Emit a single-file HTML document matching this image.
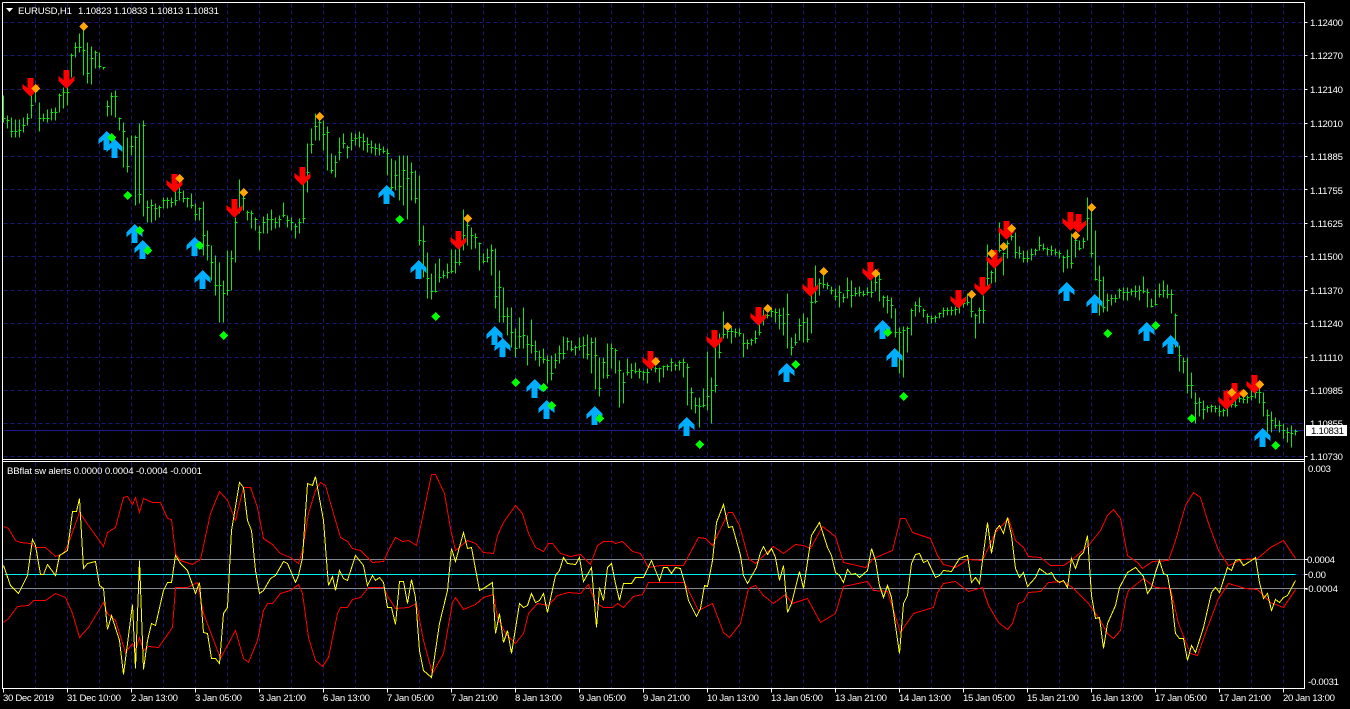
<!DOCTYPE html>
<html><head><meta charset="utf-8"><title>EURUSD,H1</title>
<style>
html,body{margin:0;padding:0;background:#000;width:1350px;height:709px;overflow:hidden}
svg{display:block}
text{font-family:"Liberation Sans",sans-serif;font-size:9.6px;fill:#fff}
</style></head><body>
<svg width="1350" height="709" viewBox="0 0 1350 709" xmlns="http://www.w3.org/2000/svg">
<defs>
<polygon id="d" points="-3,0 3,0 3,10 8,6 8,11 0,18.5 -8,11 -8,6 -3,10" fill="#ff0000"/>
<polygon id="u" points="-3,19 3,19 3,9 8,13 8,8 0,0 -8,8 -8,13 -3,9" fill="#00aeff"/>
<polygon id="o" points="0,-4.5 4.5,0 0,4.5 -4.5,0" fill="#ffa500"/>
<polygon id="g" points="0,-4.5 4.5,0 0,4.5 -4.5,0" fill="#00ff00"/>
</defs>
<rect width="1350" height="709" fill="#000"/>
<g transform="translate(.5,.5)" shape-rendering="crispEdges" fill="none">
<path stroke="#191970" stroke-dasharray="4 3" d="M3 22H1304M3 55H1304M3 89H1304M3 123H1304M3 156H1304M3 189H1304M3 223H1304M3 256H1304M3 290H1304M3 323H1304M3 357H1304M3 390H1304M3 423H1304M3 456H1304
M35 3V459M67 3V459M99 3V459M131 3V459M163 3V459M195 3V459M227 3V459M259 3V459M291 3V459M323 3V459M355 3V459M387 3V459M419 3V459M451 3V459M483 3V459M515 3V459M547 3V459M579 3V459M611 3V459M643 3V459M675 3V459M707 3V459M739 3V459M771 3V459M803 3V459M835 3V459M867 3V459M899 3V459M931 3V459M963 3V459M995 3V459M1027 3V459M1059 3V459M1091 3V459M1123 3V459M1155 3V459M1187 3V459M1219 3V459M1251 3V459M1283 3V459
M35 462V688M67 462V688M99 462V688M131 462V688M163 462V688M195 462V688M227 462V688M259 462V688M291 462V688M323 462V688M355 462V688M387 462V688M419 462V688M451 462V688M483 462V688M515 462V688M547 462V688M579 462V688M611 462V688M643 462V688M675 462V688M707 462V688M739 462V688M771 462V688M803 462V688M835 462V688M867 462V688M899 462V688M931 462V688M963 462V688M995 462V688M1027 462V688M1059 462V688M1091 462V688M1123 462V688M1155 462V688M1187 462V688M1219 462V688M1251 462V688M1283 462V688"/>
<path stroke="#1a1a8c" d="M3 430H1304"/>
<path stroke="#10e810" d="M3 95V122M2 118h3M7 115V128M6 120h3M11 117V137M10 131h3M15 119V137M14 131h3M19 119V137M18 130h3M23 117V132M22 125h3M27 113V125M26 118h3M31 93V118M30 105h3M35 85V102M34 91h3M39 102V131M38 118h3M43 113V121M42 118h3M47 109V122M46 118h3M51 108V120M50 112h3M55 107V120M54 112h3M59 93V112M58 95h3M63 87V108M62 92h3M67 87V105M66 92h3M71 53V77M70 55h3M75 42V57M74 47h3M79 33V52M78 47h3M83 27V75M82 50h3M87 42V83M86 73h3M91 46V84M90 58h3M95 50V68M94 52h3M99 52V68M98 66h3M103 67V69M102 67h3
M107 100V116M106 106h3M111 92V115M110 96h3M115 90V117M114 96h3M119 117V130M118 118h3M123 122V167M122 131h3M127 137V172M126 166h3M131 135V155M130 146h3M135 135V205M134 137h3M139 123V203M138 194h3M143 120V216M142 125h3M147 200V222M146 207h3M151 199V222M150 205h3M155 203V220M154 208h3M159 205V217M158 207h3M163 197V208M162 200h3M167 197V208M166 200h3M171 197V207M170 202h3M175 185V205M174 200h3M179 187V200M178 192h3M183 190V202M182 198h3M187 197V207M186 198h3M191 193V208M190 205h3M195 203V220M194 214h3M199 207V220M198 208h3M203 201V255M202 235h3M207 230V260M206 245h3M211 245V280M210 262h3M215 255V295M214 285h3M219 262V322M218 285h3M223 280V322M222 293h3M227 250V295M226 290h3M231 250V290M230 258h3M235 217V262M234 222h3M239 179V213M238 208h3M243 190V210M242 198h3M247 210V220M246 212h3M251 210V228M250 213h3M255 217V230M254 219h3M259 225V250M258 232h3M263 216V233M262 222h3M267 213V233M266 219h3M271 209V230M270 219h3M275 217V228M274 222h3M279 215V227M278 219h3M283 202V217M282 215h3M287 215V227M286 220h3M291 217V230M290 222h3M295 223V238M294 226h3M299 218V233M298 222h3M303 183V223M302 218h3M307 143V192M306 172h3M311 128V153M310 144h3M315 113V140M314 126h3M319 117V140M318 122h3M323 120V150M322 134h3M327 126V170M326 132h3M331 153V173M330 170h3M335 155V177M334 162h3M339 137V160M338 152h3M343 133V148M342 143h3M347 145V158M346 147h3M351 132V150M350 140h3M355 133V145M354 138h3M359 131V147M358 137h3M363 133V150M362 141h3M367 137V152M366 144h3M371 140V153M370 147h3M375 143V155M374 148h3M379 143V155M378 149h3M383 146V153M382 151h3M387 148V175M386 153h3M391 158V195M390 187h3M395 160V190M394 175h3M399 155V200M398 186h3M403 155V205M402 170h3M407 155V219M406 178h3M411 162V200M410 172h3M415 170V203M414 198h3M419 175V245M418 240h3M423 225V277M422 241h3M427 252V298M426 278h3M431 273V299M430 291h3M435 263V292M434 291h3M439 258V282M438 277h3M443 270V278M442 275h3M447 263V278M446 272h3M451 249V273M450 271h3M455 249V273M454 262h3M459 248V265M458 262h3M463 209V250M462 235h3M467 220V245M466 225h3M471 227V249M470 235h3M475 233V248M474 237h3M479 242V270M478 243h3M483 253V263M482 261h3M487 248V262M486 257h3M491 244V275M490 250h3M495 248V308M494 296h3M499 270V322M498 287h3M503 287V322M502 316h3M507 307V335M506 316h3M511 307V347M510 332h3M515 328V357M514 348h3M519 317V348M518 336h3M523 307V348M522 335h3M527 335V365M526 344h3M531 319V353M530 345h3M535 340V360M534 351h3M539 350V366M538 357h3M543 348V363M542 359h3M547 355V383M546 360h3M551 355V380M550 373h3M555 353V368M554 360h3M559 345V363M558 353h3M563 336V359M562 353h3M567 337V350M566 341h3M571 340V351M570 349h3M575 345V355M574 347h3M579 337V350M578 346h3M583 336V358M582 345h3M587 334V359M586 354h3M591 337V373M590 342h3M595 337V389M594 355h3M599 357V396M598 388h3M603 357V378M602 362h3M607 343V378M606 375h3M611 343V368M610 348h3M615 348V373M614 350h3M619 360V407M618 370h3M623 372V403M622 382h3M627 358V375M626 372h3M631 363V378M630 370h3M635 362V373M634 371h3M639 368V378M638 371h3M643 370V380M642 372h3M647 368V383M646 372h3M651 360V370M650 367h3M655 366V372M654 368h3M659 367V382M658 368h3M663 365V377M662 366h3M667 364V370M666 366h3M671 358V371M670 362h3M675 363V370M674 365h3M679 360V370M678 362h3M683 358V377M682 362h3M687 363V405M686 367h3M691 387V409M690 392h3M695 397V413M694 405h3M699 397V427M698 406h3M703 388V407M702 405h3M707 351V410M706 396h3M711 377V423M710 390h3M715 345V392M714 385h3M719 333V358M718 352h3M723 311V338M722 334h3M727 322V338M726 331h3M731 327V343M730 331h3M735 328V337M734 332h3M739 328V336M738 333h3M743 333V357M742 343h3M747 339V349M746 343h3M751 338V345M750 340h3M755 330V343M754 338h3M759 322V335M758 332h3M763 309V325M762 315h3M767 313V318M766 315h3M771 307V317M770 311h3M775 308V322M774 312h3M779 308V329M778 315h3M783 307V335M782 323h3M787 293V348M786 314h3M791 337V355M790 347h3M795 333V345M794 342h3M799 318V340M798 325h3M803 313V342M802 322h3M807 317V342M806 339h3M811 295V333M810 302h3M815 265V303M814 301h3M819 278V295M818 283h3M823 275V288M822 284h3M827 282V289M826 285h3M831 286V294M830 290h3M835 288V300M834 296h3M839 285V307M838 292h3M843 293V302M842 297h3M847 277V298M846 290h3M851 280V307M850 295h3M855 287V296M854 293h3M859 286V296M858 292h3M863 290V296M862 294h3M867 287V295M866 292h3M871 280V297M870 292h3M875 275V291M874 282h3M879 272V301M878 279h3M883 295V307M882 297h3M887 295V313M886 300h3M891 297V318M890 305h3M895 308V337M894 332h3M899 327V373M898 332h3M903 326V377M902 330h3M907 326V352M906 328h3M911 308V335M910 310h3M915 301V316M914 305h3M919 297V312M918 306h3M923 308V317M922 310h3M927 313V323M926 316h3M931 315V323M930 318h3M935 315V322M934 317h3M939 312V318M938 313h3M943 307V317M942 310h3M947 307V315M946 310h3M951 306V315M950 310h3M955 306V315M954 309h3M959 302V313M958 305h3M963 300V307M962 303h3M967 293V305M966 302h3M971 298V317M970 311h3M975 313V338M974 315h3M979 307V323M978 310h3M983 295V323M982 310h3M987 244V285M986 278h3M991 270V283M990 272h3M995 255V282M994 265h3M999 222V252M998 250h3M1003 252V275M1002 253h3M1007 240V258M1006 243h3M1011 232V240M1010 236h3M1015 232V258M1014 252h3M1019 246V258M1018 253h3M1023 250V262M1022 258h3M1027 250V262M1026 258h3M1031 248V260M1030 254h3M1035 248V255M1034 250h3M1039 236V250M1038 245h3M1043 243V250M1042 248h3M1047 247V255M1046 249h3M1051 245V255M1050 250h3M1055 248V255M1054 252h3M1059 250V258M1058 253h3M1063 255V272M1062 257h3M1067 249V268M1066 256h3M1071 233V268M1070 263h3M1075 233V257M1074 240h3M1079 240V250M1078 248h3M1083 237V248M1082 241h3M1087 197V240M1086 218h3M1091 207V257M1090 253h3M1095 230V280M1094 279h3M1099 265V315M1098 280h3M1103 276V312M1102 307h3M1107 293V311M1106 300h3M1111 294V305M1110 298h3M1115 294V302M1114 298h3M1119 288V298M1118 290h3M1123 287V300M1122 292h3M1127 287V300M1126 292h3M1131 288V295M1130 291h3M1135 285V297M1134 291h3M1139 285V300M1138 290h3M1143 276V293M1142 291h3M1147 288V307M1146 292h3M1151 298V307M1150 306h3M1155 289V305M1154 304h3M1159 283V297M1158 294h3M1163 280V297M1162 290h3M1167 284V298M1166 294h3M1171 289V313M1170 294h3M1175 313V347M1174 315h3M1179 345V371M1178 355h3M1183 357V373M1182 361h3M1187 357V393M1186 385h3M1191 372V398M1190 385h3M1195 392V423M1194 403h3M1199 397V416M1198 402h3M1203 400V419M1202 409h3M1207 405V412M1206 407h3M1211 404V412M1210 406h3M1215 405V412M1214 408h3M1219 405V416M1218 411h3M1223 408V416M1222 410h3M1227 397V416M1226 405h3M1231 400V407M1230 404h3M1235 400V407M1234 405h3M1239 392V402M1238 398h3M1243 395V403M1242 399h3M1247 395V403M1246 397h3M1251 390V400M1250 396h3M1255 388V398M1254 392h3M1259 387V403M1258 392h3M1263 392V416M1262 402h3M1267 409V432M1266 415h3M1271 411V432M1270 420h3M1275 417V428M1274 425h3M1279 420V432M1278 425h3M1283 423V438M1282 430h3M1287 427V442M1286 432h3M1291 425V447M1290 433h3M1295 429V435M1294 431h3"/>
<path stroke="#808890" d="M4 559H1304M4 588H1304"/>
<path stroke="#00f0f0" d="M4 574H1295"/>
<path stroke="#191970" stroke-dasharray="3 3" d="M1295 574H1304"/>
<polyline stroke="#ff0000" points="3,526 8,528 15,540 20,542 30,543 35,547 45,547 55,556 63,553 68,543 79,512 88,525 103,546 107,532 115,527 123,497 127,496 132,504 135,497 139,512 143,498 152,502 160,502 167,518 171,519 175,553 180,560 192,564 200,559 210,513 219,491 227,500 235,520 243,487 250,487 257,507 263,538 272,544 280,553 290,557 298,563 302,550 308,513 315,490 320,482 325,485 333,513 340,537 347,541 352,548 360,550 372,562 383,561 388,550 395,537 402,541 408,540 416,545 425,503 431,474 435,474 444,493 450,528 455,550 467,540 475,543 483,552 493,553 497,535 503,522 515,505 522,513 528,533 535,547 543,551 548,543 552,543 560,553 570,556 580,554 590,564 597,545 603,541 612,541 615,543 622,541 632,551 640,553 648,567 660,565 683,565 698,537 705,538 712,545 728,512 732,512 739,525 748,558 755,563 773,546 783,553 795,544 803,545 810,548 822,526 835,536 843,562 865,567 873,558 892,550 900,518 905,518 912,532 930,538 937,555 943,564 955,567 967,559 982,560 995,532 1008,518 1015,540 1023,547 1028,556 1040,557 1050,565 1063,565 1072,559 1088,545 1100,530 1107,515 1113,509 1120,518 1127,555 1137,562 1142,568 1152,561 1168,560 1175,540 1185,505 1193,492 1200,497 1208,523 1218,550 1228,565 1242,559 1257,558 1270,547 1283,540 1295,558"/>
<polyline stroke="#ff0000" points="3,622 8,618 17,606 28,605 33,600 45,600 55,593 65,597 72,613 79,637 88,627 103,602 107,613 115,620 125,652 132,643 135,650 139,637 143,650 148,646 158,647 172,627 175,587 187,587 197,582 203,613 220,658 235,630 243,658 248,662 257,640 263,610 267,603 272,603 280,593 290,590 298,584 302,593 308,637 315,660 322,666 328,657 337,613 340,607 347,607 352,599 360,597 368,587 383,587 388,597 395,608 408,607 416,603 423,640 432,673 443,653 452,602 455,597 463,609 475,604 483,597 493,594 497,617 505,633 515,643 523,633 528,613 537,603 548,605 557,595 568,592 580,593 588,584 595,602 603,607 612,607 617,603 623,607 633,596 642,594 648,582 660,582 684,582 698,610 712,603 723,632 729,637 740,623 748,588 755,585 763,595 773,603 785,594 792,603 807,598 820,622 835,613 843,586 867,581 873,590 887,591 900,632 913,613 933,607 937,592 943,583 955,581 968,591 982,587 988,605 998,622 1007,629 1012,623 1018,603 1023,601 1028,592 1040,591 1048,582 1062,581 1072,587 1088,603 1098,617 1107,633 1113,638 1120,630 1125,600 1128,590 1138,582 1143,578 1155,587 1170,588 1178,623 1190,653 1197,655 1207,627 1218,598 1228,583 1245,588 1257,589 1270,602 1283,607 1295,589"/>
<polyline stroke="#ffff00" points="3,565 10,585 18,593 27,575 32,539 35,545 40,574 43,574 47,564 55,575 59,555 67,550 72,511 76,511 79,498 83,568 87,563 95,561 99,585 103,588 107,629 111,615 119,640 123,674 132,604 135,668 139,560 143,669 147,640 151,623 155,625 163,590 167,582 171,582 175,555 180,563 187,570 195,593 199,582 203,632 207,633 211,658 215,658 219,663 223,613 227,607 231,530 239,482 243,487 247,520 251,530 255,570 259,593 263,590 270,578 275,575 283,561 287,563 295,582 298,575 302,557 307,483 312,485 315,476 323,520 327,573 328,585 332,576 335,590 339,570 343,578 347,580 355,555 363,565 367,585 372,575 375,580 379,577 383,582 387,607 391,607 395,624 399,581 403,581 407,603 411,579 415,597 419,650 423,670 431,677 439,623 447,590 451,548 455,561 463,532 467,548 471,547 479,590 483,588 492,582 495,633 499,613 503,642 507,630 511,653 519,603 523,607 527,605 531,593 535,602 539,600 543,593 547,612 555,575 559,570 563,557 567,563 575,564 579,557 583,581 591,567 596,627 599,587 603,600 607,567 611,563 615,583 619,600 623,583 631,583 635,577 643,577 651,560 659,580 663,567 667,567 671,573 675,567 680,568 684,582 688,600 696,616 700,608 704,585 707,586 712,560 716,522 723,504 728,527 732,526 740,555 743,575 747,583 756,567 760,552 763,546 767,554 771,548 775,557 779,580 783,565 787,612 791,603 799,571 803,588 811,535 819,522 827,547 831,555 835,572 839,575 843,582 847,569 851,574 855,573 859,577 867,570 871,548 875,560 879,585 883,597 887,585 891,597 899,653 903,603 907,595 911,563 915,554 919,553 923,562 927,560 935,577 939,575 943,570 951,571 959,558 967,555 971,582 975,577 979,583 987,522 991,553 995,530 999,525 1003,533 1007,517 1011,535 1015,568 1019,577 1023,572 1027,586 1035,577 1039,568 1047,574 1051,572 1055,579 1059,582 1063,580 1067,587 1071,558 1075,568 1079,556 1083,552 1087,535 1091,595 1095,618 1099,617 1103,648 1107,623 1115,605 1119,587 1127,572 1135,567 1143,576 1147,593 1151,587 1155,572 1159,560 1163,573 1167,575 1171,597 1175,633 1179,638 1183,638 1187,660 1191,645 1195,652 1203,627 1211,592 1215,587 1219,592 1227,567 1231,570 1235,560 1239,559 1243,565 1251,560 1255,557 1259,582 1263,598 1267,593 1271,610 1275,599 1279,602 1283,597 1287,595 1295,580"/>
<path stroke="#fff" d="M2 2H1304V688H2V2M2 459H1304M2 461H1304"/>
<path stroke="#fff" d="M3 688v4M67 688v4M131 688v4M195 688v4M259 688v4M323 688v4M387 688v4M451 688v4M515 688v4M579 688v4M643 688v4M707 688v4M771 688v4M835 688v4M899 688v4M963 688v4M1027 688v4M1091 688v4M1155 688v4M1219 688v4M1283 688v4
M1304 22h3M1304 55h3M1304 89h3M1304 123h3M1304 156h3M1304 189h3M1304 223h3M1304 256h3M1304 290h3M1304 323h3M1304 357h3M1304 390h3M1304 456h3M1304 559h3M1304 574h3M1304 588h3"/>
</g>
<g shape-rendering="crispEdges">
<use href="#d" x="30.5" y="78"/><use href="#d" x="66.5" y="70"/><use href="#d" x="174.5" y="174"/><use href="#d" x="234.5" y="199"/><use href="#d" x="302.5" y="167"/><use href="#d" x="458.5" y="231"/><use href="#d" x="650.5" y="351"/><use href="#d" x="714.5" y="330"/><use href="#d" x="758.5" y="307"/><use href="#d" x="810.5" y="278"/><use href="#d" x="870.5" y="262"/><use href="#d" x="958.5" y="290"/><use href="#d" x="982.5" y="277"/><use href="#d" x="994.5" y="250"/><use href="#d" x="1006.5" y="221"/><use href="#d" x="1070.5" y="212"/><use href="#d" x="1078.5" y="214"/><use href="#d" x="1226.5" y="391"/><use href="#d" x="1234.5" y="383"/><use href="#d" x="1254.5" y="375"/>
<use href="#u" x="106.5" y="131"/><use href="#u" x="114.5" y="139"/><use href="#u" x="134.5" y="224"/><use href="#u" x="142.5" y="240"/><use href="#u" x="194.5" y="237"/><use href="#u" x="202.5" y="270"/><use href="#u" x="386.5" y="185"/><use href="#u" x="418.5" y="260"/><use href="#u" x="494.5" y="326"/><use href="#u" x="502.5" y="338"/><use href="#u" x="534.5" y="379"/><use href="#u" x="546.5" y="400"/><use href="#u" x="594.5" y="406"/><use href="#u" x="686.5" y="417"/><use href="#u" x="786.5" y="363"/><use href="#u" x="882.5" y="320"/><use href="#u" x="894.5" y="348"/><use href="#u" x="1066.5" y="282"/><use href="#u" x="1094.5" y="294"/><use href="#u" x="1146.5" y="322"/><use href="#u" x="1170.5" y="335"/><use href="#u" x="1262.5" y="428"/>
<use href="#o" x="35.5" y="88.5"/><use href="#o" x="83.5" y="26.5"/><use href="#o" x="179.5" y="178.5"/><use href="#o" x="243.5" y="192.5"/><use href="#o" x="319.5" y="116.5"/><use href="#o" x="467.5" y="218.5"/><use href="#o" x="655.5" y="361.5"/><use href="#o" x="727.5" y="326.5"/><use href="#o" x="767.5" y="308.5"/><use href="#o" x="823.5" y="271.5"/><use href="#o" x="875.5" y="273.5"/><use href="#o" x="971.5" y="294.5"/><use href="#o" x="1003.5" y="246.5"/><use href="#o" x="1011.5" y="228.5"/><use href="#o" x="991.5" y="253.5"/><use href="#o" x="1075.5" y="235.5"/><use href="#o" x="1091.5" y="207.5"/><use href="#o" x="1231.5" y="392.5"/><use href="#o" x="1243.5" y="393.5"/><use href="#o" x="1259.5" y="384.5"/>
<use href="#g" x="111.5" y="137.5"/><use href="#g" x="127.5" y="195.5"/><use href="#g" x="139.5" y="230.5"/><use href="#g" x="147.5" y="250.5"/><use href="#g" x="199.5" y="245.5"/><use href="#g" x="223.5" y="335.5"/><use href="#g" x="399.5" y="219.5"/><use href="#g" x="435.5" y="316.5"/><use href="#g" x="515.5" y="382.5"/><use href="#g" x="543.5" y="387.5"/><use href="#g" x="551.5" y="405.5"/><use href="#g" x="599.5" y="418.5"/><use href="#g" x="699.5" y="444.5"/><use href="#g" x="795.5" y="364.5"/><use href="#g" x="887.5" y="332.5"/><use href="#g" x="903.5" y="396.5"/><use href="#g" x="1107.5" y="333.5"/><use href="#g" x="1155.5" y="325.5"/><use href="#g" x="1191.5" y="418.5"/><use href="#g" x="1275.5" y="445.5"/>
</g>
<polygon points="6,8 13,8 9.5,12" fill="#fff"/>
<text x="18" y="14" textLength="54">EURUSD,H1</text>
<text x="78" y="14" textLength="141">1.10823 1.10833 1.10813 1.10831</text>
<text x="7" y="474" textLength="195">BBflat sw alerts 0.0000 0.0004 -0.0004 -0.0001</text>
<g>
<text x="1310" y="26" textLength="33">1.12400</text><text x="1310" y="59" textLength="33">1.12270</text><text x="1310" y="93" textLength="33">1.12140</text><text x="1310" y="127" textLength="33">1.12010</text><text x="1310" y="160" textLength="33">1.11885</text><text x="1310" y="194" textLength="33">1.11755</text><text x="1310" y="227" textLength="33">1.11625</text><text x="1310" y="260" textLength="33">1.11500</text><text x="1310" y="294" textLength="33">1.11370</text><text x="1310" y="327" textLength="33">1.11240</text><text x="1310" y="361" textLength="33">1.11110</text><text x="1310" y="394" textLength="33">1.10985</text><text x="1310" y="427" textLength="33">1.10855</text><text x="1310" y="460" textLength="33">1.10730</text>
</g>
<rect x="1306" y="425" width="41" height="11" fill="#fff"/>
<text x="1311" y="434" textLength="33" style="fill:#000">1.10831</text>
<text x="1308" y="472" textLength="23">0.003</text>
<text x="1307" y="563" textLength="28">0.0004</text>
<text x="1308" y="578" textLength="18">0.00</text>
<text x="1305" y="592" textLength="33">-0.0004</text>
<text x="1308" y="685" textLength="31">-0.0031</text>
<g>
<text x="3" y="701" textLength="51">30 Dec 2019</text><text x="67" y="701" textLength="54">31 Dec 10:00</text><text x="131" y="701" textLength="47">2 Jan 13:00</text><text x="195" y="701" textLength="47">3 Jan 05:00</text><text x="259" y="701" textLength="47">3 Jan 21:00</text><text x="323" y="701" textLength="47">6 Jan 13:00</text><text x="387" y="701" textLength="47">7 Jan 05:00</text><text x="451" y="701" textLength="47">7 Jan 21:00</text><text x="515" y="701" textLength="47">8 Jan 13:00</text><text x="579" y="701" textLength="47">9 Jan 05:00</text><text x="643" y="701" textLength="47">9 Jan 21:00</text><text x="707" y="701" textLength="52">10 Jan 13:00</text><text x="771" y="701" textLength="52">13 Jan 05:00</text><text x="835" y="701" textLength="52">13 Jan 21:00</text><text x="899" y="701" textLength="52">14 Jan 13:00</text><text x="963" y="701" textLength="52">15 Jan 05:00</text><text x="1027" y="701" textLength="52">15 Jan 21:00</text><text x="1091" y="701" textLength="52">16 Jan 13:00</text><text x="1155" y="701" textLength="52">17 Jan 05:00</text><text x="1219" y="701" textLength="52">17 Jan 21:00</text><text x="1283" y="701" textLength="52">20 Jan 13:00</text>
</g>
</svg>
</body></html>
